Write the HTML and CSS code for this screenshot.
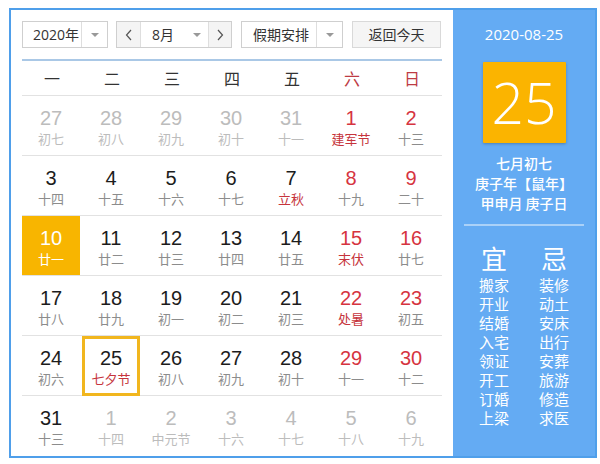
FILE: index.html
```html
<!DOCTYPE html>
<html lang="zh-CN">
<head>
<meta charset="utf-8">
<title>万年历</title>
<link rel="stylesheet" href="styles.css">
</head>
<body>
<div class="widget">
  <div class="main">
    <div class="controls">
      <div class="select year">
        <span class="sel-text">2020年</span>
        <span class="sel-arrow"><i class="tri"></i></span>
      </div>
      <div class="select month">
        <span class="nav prev"><svg width="8" height="12" viewBox="0 0 8 12"><polyline points="6,1 1.5,6 6,11" fill="none" stroke="#555" stroke-width="1.2"/></svg></span>
        <span class="month-text">8月</span>
        <span class="month-arrow"><i class="tri"></i></span>
        <span class="nav next"><svg width="8" height="12" viewBox="0 0 8 12"><polyline points="2,1 6.5,6 2,11" fill="none" stroke="#555" stroke-width="1.2"/></svg></span>
      </div>
      <div class="select holiday">
        <span class="sel-text">假期安排</span>
        <span class="sel-arrow"><i class="tri"></i></span>
      </div>
      <div class="today-btn">返回今天</div>
    </div>
    <div class="weekhead">
      <span>一</span><span>二</span><span>三</span><span>四</span><span>五</span><span class="wk">六</span><span class="wk">日</span>
    </div>
    <div class="row">
      <div class="cell other"><b>27</b><em>初七</em></div>
      <div class="cell other"><b>28</b><em>初八</em></div>
      <div class="cell other"><b>29</b><em>初九</em></div>
      <div class="cell other"><b>30</b><em>初十</em></div>
      <div class="cell other"><b>31</b><em>十一</em></div>
      <div class="cell red"><b>1</b><em class="fest">建军节</em></div>
      <div class="cell red"><b>2</b><em>十三</em></div>
    </div>
    <div class="row">
      <div class="cell"><b>3</b><em>十四</em></div>
      <div class="cell"><b>4</b><em>十五</em></div>
      <div class="cell"><b>5</b><em>十六</em></div>
      <div class="cell"><b>6</b><em>十七</em></div>
      <div class="cell"><b>7</b><em class="fest">立秋</em></div>
      <div class="cell red"><b>8</b><em>十九</em></div>
      <div class="cell red"><b>9</b><em>二十</em></div>
    </div>
    <div class="row">
      <div class="cell sel"><b>10</b><em>廿一</em></div>
      <div class="cell"><b>11</b><em>廿二</em></div>
      <div class="cell"><b>12</b><em>廿三</em></div>
      <div class="cell"><b>13</b><em>廿四</em></div>
      <div class="cell"><b>14</b><em>廿五</em></div>
      <div class="cell red"><b>15</b><em class="fest">末伏</em></div>
      <div class="cell red"><b>16</b><em>廿七</em></div>
    </div>
    <div class="row">
      <div class="cell"><b>17</b><em>廿八</em></div>
      <div class="cell"><b>18</b><em>廿九</em></div>
      <div class="cell"><b>19</b><em>初一</em></div>
      <div class="cell"><b>20</b><em>初二</em></div>
      <div class="cell"><b>21</b><em>初三</em></div>
      <div class="cell red"><b>22</b><em class="fest">处暑</em></div>
      <div class="cell red"><b>23</b><em>初五</em></div>
    </div>
    <div class="row">
      <div class="cell"><b>24</b><em>初六</em></div>
      <div class="cell today"><b>25</b><em class="fest">七夕节</em></div>
      <div class="cell"><b>26</b><em>初八</em></div>
      <div class="cell"><b>27</b><em>初九</em></div>
      <div class="cell"><b>28</b><em>初十</em></div>
      <div class="cell red"><b>29</b><em>十一</em></div>
      <div class="cell red"><b>30</b><em>十二</em></div>
    </div>
    <div class="row last">
      <div class="cell"><b>31</b><em>十三</em></div>
      <div class="cell other"><b>1</b><em>十四</em></div>
      <div class="cell other"><b>2</b><em>中元节</em></div>
      <div class="cell other"><b>3</b><em>十六</em></div>
      <div class="cell other"><b>4</b><em>十七</em></div>
      <div class="cell other"><b>5</b><em>十八</em></div>
      <div class="cell other"><b>6</b><em>十九</em></div>
    </div>
  </div>
  <div class="panel">
    <div class="p-date">2020-08-25</div>
    <div class="p-day">25</div>
    <div class="p-lunar">七月初七</div>
    <div class="p-line">庚子年【鼠年】</div>
    <div class="p-line">甲申月 庚子日</div>
    <div class="p-sep"></div>
    <div class="yiji">
      <div class="col">
        <div class="yj-title">宜</div>
        <div>搬家</div><div>开业</div><div>结婚</div><div>入宅</div><div>领证</div><div>开工</div><div>订婚</div><div>上梁</div>
      </div>
      <div class="col">
        <div class="yj-title">忌</div>
        <div>装修</div><div>动土</div><div>安床</div><div>出行</div><div>安葬</div><div>旅游</div><div>修造</div><div>求医</div>
      </div>
    </div>
  </div>
</div>
</body>
</html>
```
FILE: styles.css
```css
* { box-sizing: border-box; }
body {
  margin: 0;
  background: #fff;
  font-family: "Open Sans", "Noto Sans CJK SC", sans-serif;
  color: #222;
}
.widget {
  margin: 8px 0 0 9px;
  width: 588px;
  height: 450px;
  border: 2px solid #4f9fea;
  display: flex;
}
.main {
  width: 442px;
  padding: 11px 11px 0 11px;
}
.controls {
  display: flex;
  height: 27px;
  margin-bottom: 11px;
  font-size: 14px;
  color: #333;
}
.select {
  display: flex;
  height: 27px;
  border: 1px solid #cfcfcf;
  background: #fff;
}
.year { width: 86px; margin-right: 8px; }
.month { width: 116px; margin-right: 9px; }
.holiday { width: 102px; margin-right: 9px; }
.sel-text {
  flex: 1;
  line-height: 25px;
  padding-left: 10px;
  white-space: nowrap;
}
.holiday .sel-text { padding-left: 11px; }
.sel-arrow {
  width: 26px;
  border-left: 1px solid #dedede;
  display: flex;
  align-items: center;
  justify-content: center;
}
.tri {
  display: block;
  width: 0;
  height: 0;
  border-left: 4px solid transparent;
  border-right: 4px solid transparent;
  border-top: 4px solid #999;
}
.nav {
  width: 24px;
  background: #f4f4f4;
  display: flex;
  align-items: center;
  justify-content: center;
}
.prev { border-right: 1px solid #dedede; }
.next { border-left: 1px solid #dedede; width: 23px; }
.month-text {
  flex: 1;
  line-height: 25px;
  padding-left: 11px;
}
.month-arrow {
  width: 22px;
  display: flex;
  align-items: center;
  justify-content: center;
}
.today-btn {
  width: 89px;
  height: 27px;
  border: 1px solid #d9d9d9;
  background: #f5f5f5;
  text-align: center;
  line-height: 25px;
}
.weekhead {
  display: grid;
  grid-template-columns: repeat(7, 60px);
  height: 37px;
  border-top: 2px solid #aac8e6;
  border-bottom: 1px solid #e2e2e2;
  align-items: center;
  text-align: center;
  font-size: 16px;
  color: #333;
  font-family: "Noto Sans CJK SC", sans-serif;
}
.weekhead .wk { color: #bd3b44; }
.row {
  display: grid;
  grid-template-columns: repeat(7, 60px);
  height: 60px;
  border-bottom: 1px solid #e2e2e2;
}
.row.last { border-bottom: none; }
.cell {
  width: 58px;
  height: 59px;
  text-align: center;
  padding-top: 11px;
}
.cell b {
  display: block;
  font-weight: normal;
  font-family: "Liberation Sans", "Noto Sans CJK SC", sans-serif;
  font-size: 20px;
  line-height: 22px;
  color: #1c1c1c;
}
.cell em {
  display: block;
  font-style: normal;
  font-size: 13px;
  line-height: 19px;
  color: #8c8c8c;
  font-family: "Noto Sans CJK SC", sans-serif;
  white-space: nowrap;
}
.cell.red b { color: #d6343f; }
.cell em.fest { color: #c6343c; }
.cell.other b, .cell.other em { color: #bcbcbc; }
.cell.sel { background: #f8b500; }
.cell.sel b, .cell.sel em { color: #fff; }
.cell.today {
  border: 3px solid #f1b61e;
  padding-top: 8px;
  height: 60px;
}
.panel {
  width: 142px;
  background: #64abf3;
  color: #fff;
  text-align: center;
  padding-top: 14px;
  font-family: "Open Sans", "Noto Sans CJK SC", sans-serif;
}
.p-date {
  font-size: 15px;
  line-height: 20px;
}
.p-day {
  width: 83px;
  height: 81px;
  margin: 18px auto 0;
  background: #fbb400;
  box-shadow: 0 1px 3px rgba(0, 0, 0, 0.25);
  border-radius: 1px;
  font-size: 57px;
  font-weight: 300;
  line-height: 81px;
}
.p-lunar {
  margin-top: 10px;
  font-size: 14px;
  line-height: 20px;
  font-family: "Noto Sans CJK SC", sans-serif;
  font-weight: 500;
}
.p-line {
  font-size: 14px;
  line-height: 20px;
  font-family: "Noto Sans CJK SC", sans-serif;
  font-weight: 500;
}
.p-sep {
  width: 120px;
  height: 2px;
  margin: 11px auto 0;
  background: rgba(255, 255, 255, 0.45);
}
.yiji {
  display: flex;
  justify-content: center;
  margin-top: 16px;
  font-family: "Noto Sans CJK SC", sans-serif;
  font-size: 15px;
  line-height: 19px;
}
.col { width: 60px; }
.yj-title {
  font-size: 26px;
  line-height: 32px;
  margin-bottom: 1px;
}
```
